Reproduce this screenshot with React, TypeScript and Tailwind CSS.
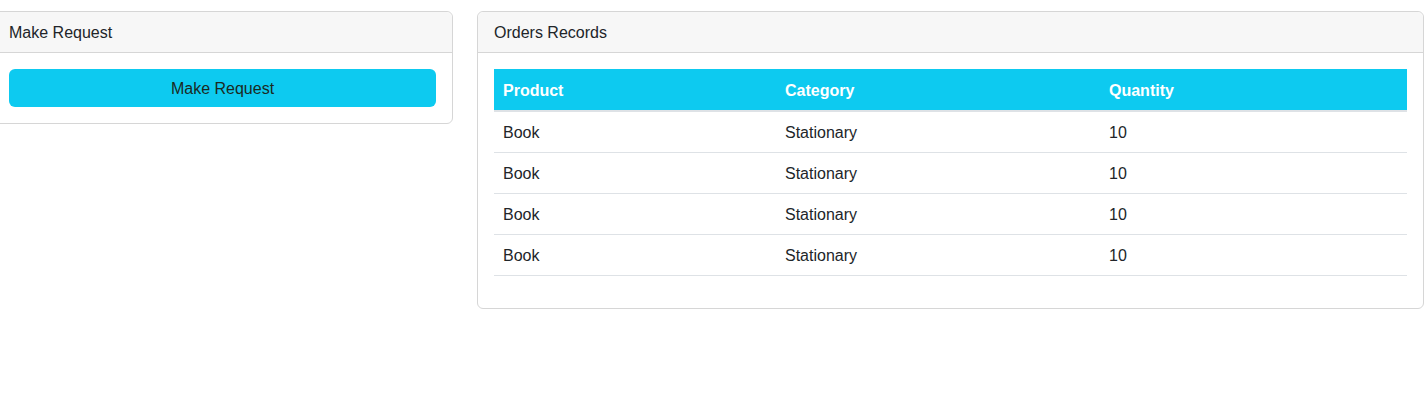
const orders = [
  { product: 'Book', category: 'Stationary', quantity: 10 },
  { product: 'Book', category: 'Stationary', quantity: 10 },
  { product: 'Book', category: 'Stationary', quantity: 10 },
  { product: 'Book', category: 'Stationary', quantity: 10 },
];

export default function App() {
  return (
    <div
      className="min-h-[409px] bg-white pt-[11px] text-[16px] text-[#212529]"
      style={{ fontFamily: '"Segoe UI", "Liberation Sans", Arial, sans-serif' }}
    >
      <div className="flex items-start gap-[24px] ml-[-8px]">
        {/* left card */}
        <div className="w-[461px] shrink-0 rounded-[6px] border border-[#d6d6d6] bg-white">
          <div className="h-[41px] rounded-t-[6px] border-b border-[#d6d6d6] bg-[#f7f7f7] px-4 pt-[1px] leading-[40px]">
            Make Request
          </div>
          <div className="p-4">
            <button className="h-[38px] w-full rounded-[6px] bg-[#0dcaf0] pt-[2px] text-[16px] text-[#1b2a1f]">
              Make Request
            </button>
          </div>
        </div>

        {/* right card */}
        <div className="w-[947px] shrink-0 rounded-[6px] border border-[#d6d6d6] bg-white">
          <div className="h-[41px] rounded-t-[6px] border-b border-[#d6d6d6] bg-[#f7f7f7] px-4 pt-[1px] leading-[40px]">
            Orders Records
          </div>
          <div className="p-4">
            <table className="mb-4 w-full border-collapse">
              <thead>
                <tr className="h-[42px] border-b-2 border-[#dee2e6] bg-[#0dcaf0] text-left text-white">
                  <th className="w-[282px] pl-[9px] pr-2 pt-[2px] font-bold">Product</th>
                  <th className="w-[324px] pl-[9px] pr-2 pt-[2px] font-bold">Category</th>
                  <th className="pl-[9px] pr-2 pt-[2px] font-bold">Quantity</th>
                </tr>
              </thead>
              <tbody>
                {orders.map((o, i) => (
                  <tr key={i} className="h-[41px] border-b border-[#dee2e6]">
                    <td className="pl-[9px] pr-2 pt-[2px]">{o.product}</td>
                    <td className="pl-[9px] pr-2 pt-[2px]">{o.category}</td>
                    <td className="pl-[9px] pr-2 pt-[2px]">{o.quantity}</td>
                  </tr>
                ))}
              </tbody>
            </table>
          </div>
        </div>
      </div>
    </div>
  );
}
